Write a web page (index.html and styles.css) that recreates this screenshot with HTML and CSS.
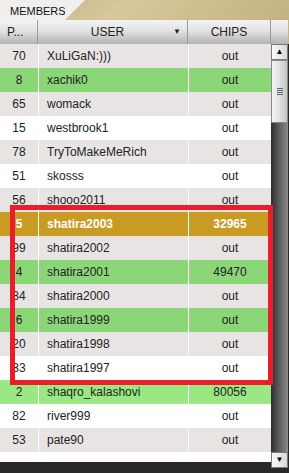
FILE: index.html
```html
<!DOCTYPE html>
<html lang="en">
<head>
    <meta charset="UTF-8">
    <title>Members</title>
    <link rel="stylesheet" href="styles.css">
</head>
<body>
    <div class="tabs">
        <div class="tab">MEMBERS</div>
    </div>
    <div class="panel">
        <div class="table">
            <div class="head">
                <div class="col-p">P...</div>
                <div class="col-user">USER <span class="sort">&#9660;</span></div>
                <div class="col-chips">CHIPS</div>
            </div>
            <div class="row gray"><div class="col-p">70</div><div class="col-user">XuLiGaN:)))</div><div class="col-chips">out</div></div>
            <div class="row green"><div class="col-p">8</div><div class="col-user">xachik0</div><div class="col-chips">out</div></div>
            <div class="row gray"><div class="col-p">65</div><div class="col-user">womack</div><div class="col-chips">out</div></div>
            <div class="row"><div class="col-p">15</div><div class="col-user">westbrook1</div><div class="col-chips">out</div></div>
            <div class="row gray"><div class="col-p">78</div><div class="col-user">TryToMakeMeRich</div><div class="col-chips">out</div></div>
            <div class="row"><div class="col-p">51</div><div class="col-user">skosss</div><div class="col-chips">out</div></div>
            <div class="row gray"><div class="col-p">56</div><div class="col-user">shooo2011</div><div class="col-chips">out</div></div>
            <div class="row gold"><div class="col-p">5</div><div class="col-user">shatira2003</div><div class="col-chips">32965</div></div>
            <div class="row gray"><div class="col-p">99</div><div class="col-user">shatira2002</div><div class="col-chips">out</div></div>
            <div class="row green"><div class="col-p">4</div><div class="col-user">shatira2001</div><div class="col-chips">49470</div></div>
            <div class="row gray"><div class="col-p">84</div><div class="col-user">shatira2000</div><div class="col-chips">out</div></div>
            <div class="row green"><div class="col-p">6</div><div class="col-user">shatira1999</div><div class="col-chips">out</div></div>
            <div class="row gray"><div class="col-p">20</div><div class="col-user">shatira1998</div><div class="col-chips">out</div></div>
            <div class="row"><div class="col-p">33</div><div class="col-user">shatira1997</div><div class="col-chips">out</div></div>
            <div class="row lime"><div class="col-p">2</div><div class="col-user">shaqro_kalashovi</div><div class="col-chips">80056</div></div>
            <div class="row"><div class="col-p">82</div><div class="col-user">river999</div><div class="col-chips">out</div></div>
            <div class="row gray"><div class="col-p">53</div><div class="col-user">pate90</div><div class="col-chips">out</div></div>
            <div class="filler"></div>
        </div>
        <div class="scrollbar">
            <div class="sb-head"></div>
            <div class="sb-btn">&#9650;</div>
            <div class="sb-thumb"><span class="grip"></span></div>
            <div class="sb-track"></div>
            <div class="sb-btn">&#9660;</div>
        </div>
        <div class="highlight"></div>
    </div>
</body>
</html>
```

FILE: styles.css
```css
body {
    margin: 0;
    font-family: "Liberation Sans", Arial, sans-serif;
    font-size: 12px;
    color: #222;
    background: #2a2826;
    width: 289px;
    height: 473px;
    overflow: hidden;
}
.tabs {
    height: 20px;
    background: linear-gradient(135deg, #bfae7c, #d6c89c 40%, #c4b382);
}
.tab {
    position: relative;
    width: 65px;
    height: 20px;
    box-sizing: border-box;
    padding: 5px 0 0 10px;
    background: #efefef;
    font-size: 11px;
    color: #111;
}
.tab::after {
    content: "";
    position: absolute;
    top: 0;
    right: -20px;
    border-top: 20px solid #efefef;
    border-right: 20px solid transparent;
}
.panel {
    position: relative;
    display: flex;
    align-items: flex-start;
    background: linear-gradient(#c4b382, #c4b382 24px, transparent 24px);
}
.table {
    width: 271px;
}
.head, .row {
    display: flex;
    height: 24px;
    align-items: center;
}
.head {
    background: linear-gradient(#f3f3f3, #e2e2e2 45%, #b3b3b3);
    color: #222;
}
.head > div {
    height: 24px;
    line-height: 24px;
    border-right: 1px solid #9a9a9a;
}
.col-p {
    width: 38px;
    text-align: center;
    border-right: 1px solid #fff;
}
.col-user {
    width: 150px;
    padding-left: 8px;
    box-sizing: border-box;
    border-right: 1px solid #fff;
}
.col-chips {
    flex: 1;
    text-align: center;
}
.head .col-p {
    text-align: left;
    padding-left: 7px;
    box-sizing: border-box;
}
.head .col-user {
    position: relative;
    text-align: center;
    padding: 0 10px 0 0;
}
.head .col-chips {
    border-right: 1px solid #9a9a9a;
}
.sort {
    position: absolute;
    right: 6px;
    top: 0;
    font-size: 8px;
}
.row {
    background: #fff;
}
.row > div {
    height: 24px;
    line-height: 24px;
}
.gray {
    background: #e8e4e4;
}
.green {
    background: #8bd677;
}
.lime {
    background: #99e884;
}
.gold {
    background: #c99b22;
    color: #fff;
    font-weight: bold;
}
.filler {
    height: 10px;
    background: #fff;
}
.scrollbar {
    width: 17px;
    display: flex;
    flex-direction: column;
    height: 448px;
}
.sb-head {
    height: 24px;
    background: linear-gradient(#f3f3f3, #e2e2e2 45%, #b3b3b3);
}
.sb-btn {
    height: 16px;
    box-sizing: border-box;
    border: 1px solid #7a7a7a;
    background: linear-gradient(90deg, #fafafa, #d8d8d8);
    font-size: 8px;
    line-height: 14px;
    text-align: center;
    color: #000;
}
.sb-thumb {
    height: 63px;
    box-sizing: border-box;
    border: 1px solid #8a8a8a;
    background: linear-gradient(90deg, #f4f4f4, #dcdcdc 60%, #c4c4c4);
    display: flex;
    align-items: center;
    justify-content: center;
}
.grip {
    width: 6px;
    height: 7px;
    background: repeating-linear-gradient(#5c6670 0, #5c6670 1px, transparent 1px, transparent 2px);
}
.sb-track {
    flex: 1;
    background: linear-gradient(90deg, #2c2c2c, #555 40%, #8a8a8a);
}
.highlight {
    position: absolute;
    left: 10px;
    top: 185px;
    width: 263px;
    height: 180px;
    box-sizing: border-box;
    border: 5px solid #ea1d2a;
}
```
